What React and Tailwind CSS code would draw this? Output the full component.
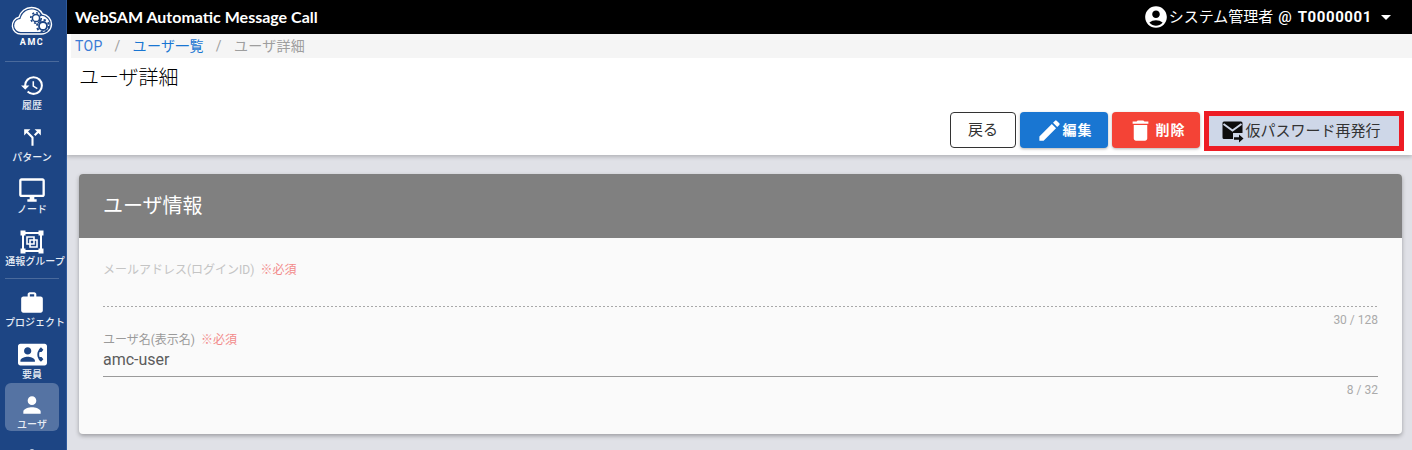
import React from 'react';
import { MdHistory, MdCallSplit, MdOutlineDesktopWindows, MdWork, MdContactPhone, MdPerson, MdEdit, MdDelete, MdAccountCircle, MdArrowDropDown } from 'react-icons/md';

const font = { fontFamily: 'Roboto, "Noto Sans CJK JP", sans-serif' };

const CLOUD = 'M10 29a8.500 8.500 0 0 1-2-16.800C9.500 6.500 14.500 2.500 20.500 2.500c5 0 9 2.500 11 6.500 5 .8 9 5 9 10a10 10 0 0 1-10 10z';

const CloudLogo = () => (
    <svg width="42" height="32" viewBox="0 0 42 32">
        <path d={CLOUD} fill="#1d4584" stroke="#fff" strokeWidth="1.400" />
        <path d="M10 27a6.500 6.500 0 0 1-.6-13C10.800 8.500 15 4.500 20.500 4.500c4.500 0 8 2.300 9.700 6.300 4.800.4 8.300 3.900 8.300 8.200a8 8 0 0 1-8 8z" fill="#fff" />
        <circle cx="25" cy="13" r="3.600" fill="#fff" stroke="#1d4584" strokeWidth="1.500" />
        <circle cx="25" cy="13" r="5.200" fill="none" stroke="#1d4584" strokeWidth="1.600" strokeDasharray="2 2" />
        <circle cx="32" cy="21" r="4" fill="#fff" stroke="#1d4584" strokeWidth="1.800" />
        <circle cx="32" cy="21" r="6" fill="none" stroke="#1d4584" strokeWidth="2" strokeDasharray="2.300 2.400" />
    </svg>
);

const GroupIcon = () => (
    <svg width="24" height="24" viewBox="0 0 24 24" fill="none" stroke="#fff">
        <path d="M3 3h18v18H3z" strokeWidth="2" />
        <rect x="1" y="1" width="4" height="4" fill="#fff" strokeWidth="1" />
        <rect x="19" y="1" width="4" height="4" fill="#fff" strokeWidth="1" />
        <rect x="1" y="19" width="4" height="4" fill="#fff" strokeWidth="1" />
        <rect x="19" y="19" width="4" height="4" fill="#fff" strokeWidth="1" />
        <path d="M7 7h7v7H7z M10 10h7v7h-7z" strokeWidth="1.600" />
    </svg>
);

const MailSendIcon = () => (
    <svg width="24" height="24" viewBox="0 0 24 24" className="shrink-0">
        <path d="M3 2.500h17a1.500 1.500 0 0 1 1.500 1.500v16H3a1.500 1.500 0 0 1-1.500-1.500V4A1.500 1.500 0 0 1 3 2.500z" fill="#0d0d0d" />
        <path d="M2.500 5 11.500 11.500l9-6.500" stroke="#ced7e8" strokeWidth="2" fill="none" />
        <path d="M12 14h12v10H12z" fill="#ced7e8" />
        <path d="M13 18.300h5V15.500l4.500 4-4.500 4v-2.800h-5z" fill="#0d0d0d" />
    </svg>
);

const NavItem = ({ icon, label, labelClass = '' }) => (
    <div className="flex h-[52px] w-[54px] shrink-0 flex-col items-center">
        <div className="mt-[3px] flex h-[27px] items-center justify-center text-white">{icon}</div>
        <div className={`whitespace-nowrap text-[10px] leading-[13px] font-medium text-[#e8edf5] ${labelClass}`}>{label}</div>
    </div>
);

const ActiveNavItem = ({ icon, label }) => (
    <div className="mt-[-7px] flex h-[48px] w-[54px] shrink-0 flex-col items-center rounded-md bg-white/25">
        <div className="mt-[9px] flex h-[27px] items-center justify-center text-white">{icon}</div>
        <div className="whitespace-nowrap text-[10px] leading-[13px] font-medium text-[#e8edf5]">{label}</div>
    </div>
);

const Field = ({ label, value, count, dotted, labelClass }) => (
    <div>
        <div className="flex items-center text-xs leading-4">
            <span className={labelClass}>{label}</span>
            <span className="ml-[6px] text-[#f28b8b]">※必須</span>
        </div>
        <div className={`h-[29px] text-base leading-6 text-[#5c5c5c] ${dotted ? 'bg-[repeating-linear-gradient(to_right,#a8a8a8_0,#a8a8a8_2px,transparent_2px,transparent_4px)] bg-[length:100%_1px] bg-bottom bg-no-repeat' : 'border-b border-[#9a9a9a]'}`}>{value}</div>
        <div className="mt-[5px] text-right text-xs leading-4 text-[#aaaaaa]">{count}</div>
    </div>
);

const App = () => {
    return (
        <div className="flex h-[450px] w-[1412px] overflow-hidden bg-[#e0e1e7]" style={font}>
            <aside className="flex h-[450px] w-[67px] shrink-0 flex-col items-center overflow-hidden border-r border-[#2f5a9c] bg-[#1d4584] pr-[2px]">
                <div className="flex h-[61px] w-full shrink-0 flex-col items-center pt-[5px]">
                    <CloudLogo />
                    <div className="text-[9px] leading-[10px] font-bold tracking-[1.5px] text-white">AMC</div>
                </div>
                <div className="h-px w-[54px] shrink-0 bg-white/20" />
                <div className="mt-[7px] flex shrink-0 flex-col items-center">
                    <NavItem icon={<MdHistory size={25} />} label="履歴" />
                    <NavItem icon={<MdCallSplit size={25} />} label="パターン" />
                    <NavItem icon={<MdOutlineDesktopWindows size={28} />} label="ノード" />
                    <NavItem icon={<GroupIcon />} label="通報グループ" labelClass="ml-[6px]" />
                </div>
                <div className="mt-[1px] h-px w-[54px] shrink-0 bg-white/20" />
                <div className="mt-[7px] flex shrink-0 flex-col items-center">
                    <NavItem icon={<MdWork size={26} />} label="プロジェクト" labelClass="ml-[6px]" />
                    <NavItem icon={<MdContactPhone size={29} />} label="要員" />
                    <ActiveNavItem icon={<MdPerson size={26} />} label="ユーザ" />
                    <div className="mt-[10px]"><NavItem icon={<MdPerson size={26} />} label="" /></div>
                </div>
            </aside>
            <div className="flex min-w-0 flex-1 flex-col">
                <header className="flex h-[34px] shrink-0 items-center justify-between bg-black pl-2 pr-[14px] text-white">
                    <div className="text-base font-bold" style={{ fontFamily: 'Lato, sans-serif' }}>WebSAM Automatic Message Call</div>
                    <div className="flex items-center text-[15px]">
                        <MdAccountCircle size={26} />
                        <span>システム管理者</span>
                        <span className="ml-[5px] font-medium">@</span>
                        <span className="ml-[6px] font-bold tracking-[0.6px]">T0000001</span>
                        <MdArrowDropDown size={24} className="ml-[2px]" />
                    </div>
                </header>
                <div className="h-[121px] shrink-0 bg-white shadow-[0_2px_4px_rgba(0,0,0,0.2)]">
                    <div className="ml-1 flex h-6 items-center bg-[#f5f5f5] pl-1 text-sm tracking-[0.3px]">
                        <span className="text-[#3a7bd5]">TOP</span>
                        <span className="mx-3 text-[#a0a0a0]">/</span>
                        <span className="text-[#1976d2]">ユーザ一覧</span>
                        <span className="mx-3 text-[#a0a0a0]">/</span>
                        <span className="text-[#9e9e9e]">ユーザ詳細</span>
                    </div>
                    <h1 className="ml-3 mt-[6px] text-xl leading-[28px] font-light text-black">ユーザ詳細</h1>
                    <div className="mr-2 mt-[20px] flex items-start justify-end gap-1">
                        <button className="h-9 w-[66px] rounded border border-[#333] bg-white text-[15px] text-[#333]">戻る</button>
                        <button className="flex h-9 w-[88px] items-center justify-center rounded bg-[#1976d2] text-sm font-bold tracking-[1px] text-white shadow-[0_1px_3px_rgba(0,0,0,0.3)]"><MdEdit size={27} />編集</button>
                        <button className="flex h-9 w-[88px] items-center justify-center rounded bg-[#f44336] text-sm font-bold tracking-[1px] text-white shadow-[0_1px_3px_rgba(0,0,0,0.3)]"><MdDelete size={27} className="mr-[2px]" />削除</button>
                        <button className="mt-[-1px] flex h-[40px] w-[200px] items-center justify-center border-[5px] border-[#ed1c24] bg-[#ced7e8] pr-[6px] text-[15px] text-[#333]"><MailSendIcon />仮パスワード再発行</button>
                    </div>
                </div>
                <main className="pl-3 pr-[10px] pt-[19px]">
                    <section className="h-[260px] overflow-hidden rounded bg-[#fafafa] shadow-[0_2px_4px_rgba(0,0,0,0.3)]">
                        <div className="flex h-16 items-center bg-[#808080] pl-6 text-xl font-normal text-white">ユーザ情報</div>
                        <div className="px-6 pt-6">
                            <Field label="メールアドレス(ログインID)" labelClass="text-[#c4c4c4]" value="" count="30 / 128" dotted />
                            <div className="mt-1">
                                <Field label="ユーザ名(表示名)" labelClass="text-[#9a9a9a]" value="amc-user" count="8 / 32" />
                            </div>
                        </div>
                    </section>
                </main>
            </div>
        </div>
    );
};

export default App;
